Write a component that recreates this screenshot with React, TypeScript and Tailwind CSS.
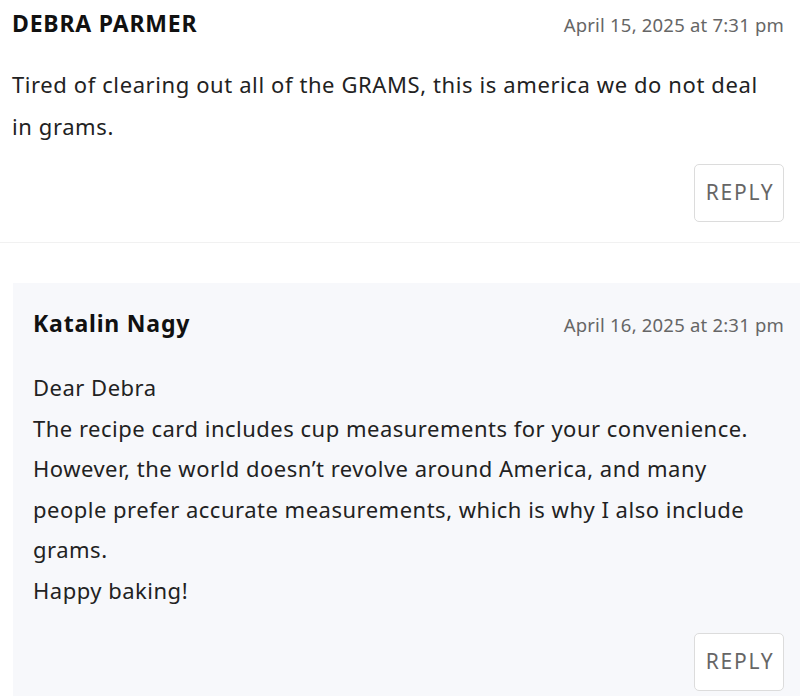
import React from "react";

type CommentProps = {
  name: string;
  date: string;
  children: React.ReactNode;
};

const ReplyButton = () => (
  <div className="flex justify-end">
    <button className="h-[58px] w-[90px] rounded-[5px] border border-[#dcdcdc] bg-white pl-[2px] text-[21px] tracking-[1.8px] text-[#666]">
      REPLY
    </button>
  </div>
);

const CommentHead = ({ name, date }: { name: string; date: string }) => (
  <div className="flex items-baseline justify-between">
    <span className="text-[23px] font-bold leading-[30px] tracking-[0.8px] text-[#111]">{name}</span>
    <span className="text-[18.5px] leading-[30px] tracking-[0.2px] text-[#666]">{date}</span>
  </div>
);

const Comment = ({ name, date, children }: CommentProps) => (
  <div className="pl-3 pr-4 pt-2 pb-5">
    <CommentHead name={name} date={date} />
    <div className="mt-[24px] pr-[10px] text-[22px] leading-[41.5px] tracking-[0.6px] text-[#222]">
      {children}
    </div>
    <div className="mt-[17px]">
      <ReplyButton />
    </div>
  </div>
);

const Reply = ({ name, date, children }: CommentProps) => (
  <div className="ml-[13px] bg-[#f7f8fb] pl-5 pr-4 pt-[25px] pb-[5px]">
    <CommentHead name={name} date={date} />
    <div className="mt-[27px] text-[22px] leading-[40.5px] tracking-[0.5px] text-[#222]">{children}</div>
    <div className="mt-[23px]">
      <ReplyButton />
    </div>
  </div>
);

export default function App() {
  return (
    <div
      className="h-[696px] w-[800px] overflow-hidden bg-white"
      style={{ fontFamily: '"Noto Sans", "Open Sans", sans-serif' }}
    >
      <Comment name="DEBRA PARMER" date="April 15, 2025 at 7:31 pm">
        Tired of clearing out all of the GRAMS, this is america we do not deal in grams.
      </Comment>
      <div className="h-px bg-[#f1f1f1]" />
      <div className="mt-[40px]">
        <Reply name="Katalin Nagy" date="April 16, 2025 at 2:31 pm">
          <p>Dear Debra</p>
          <p>
            The recipe card includes cup measurements for your convenience. However, the world
            doesn’t revolve around America, and many people prefer accurate measurements, which is
            why I also include grams.
          </p>
          <p>Happy baking!</p>
        </Reply>
      </div>
    </div>
  );
}
